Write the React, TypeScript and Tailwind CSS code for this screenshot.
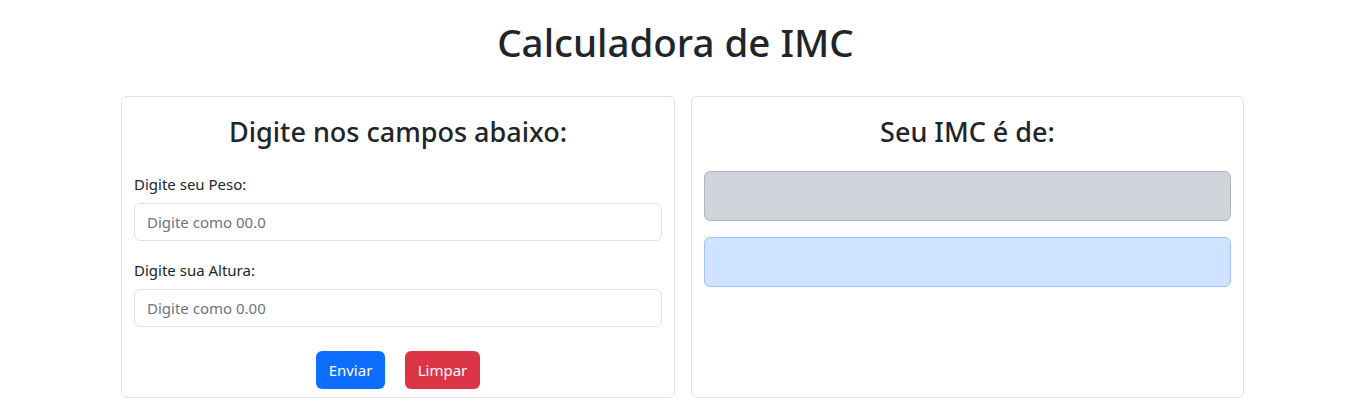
export default function App() {
  const font = { fontFamily: '"Noto Sans", "Open Sans", sans-serif' };
  return (
    <div className="bg-white w-[1351px] h-[406px] overflow-hidden text-[#212529]" style={font}>
      <h1 className="text-center text-[38.5px] font-medium leading-[48px] pt-[18px] h-[96px]">Calculadora de IMC</h1>
      <div className="flex gap-[16px] pl-[121px]">
        <div className="w-[554px] h-[302px] border border-[#dee2e6] rounded-[6px] px-[12px] flex flex-col">
          <h3 className="text-center text-[27px] font-medium leading-[34px] mt-[18px] mb-[25px]">Digite nos campos abaixo:</h3>
          <label className="text-[15px] leading-[20px] mb-[9px]">Digite seu Peso:</label>
          <div className="h-[38px] border border-[#dee2e6] rounded-[6px] px-[12px] flex items-center text-[15px] text-[#6c757d]">Digite como 00.0</div>
          <label className="text-[15px] leading-[20px] mt-[19px] mb-[9px]">Digite sua Altura:</label>
          <div className="h-[38px] border border-[#dee2e6] rounded-[6px] px-[12px] flex items-center text-[15px] text-[#6c757d]">Digite como 0.00</div>
          <div className="flex justify-center gap-[20px] mt-[24px]">
            <button className="h-[38px] w-[69px] rounded-[6px] bg-[#0d6efd] text-white text-[15px]">Enviar</button>
            <button className="h-[38px] w-[75px] rounded-[6px] bg-[#dc3545] text-white text-[15px]">Limpar</button>
          </div>
        </div>
        <div className="w-[553px] h-[302px] border border-[#dee2e6] rounded-[6px] px-[12px] flex flex-col">
          <h3 className="text-center text-[27px] font-medium leading-[34px] mt-[18px] mb-[22px]">Seu IMC é de:</h3>
          <div className="h-[50px] rounded-[6px] border border-[#adb5bd] bg-[#ced4da]"></div>
          <div className="h-[50px] rounded-[6px] border border-[#9ec5fe] bg-[#cfe2ff] mt-[16px]"></div>
        </div>
      </div>
    </div>
  );
}
